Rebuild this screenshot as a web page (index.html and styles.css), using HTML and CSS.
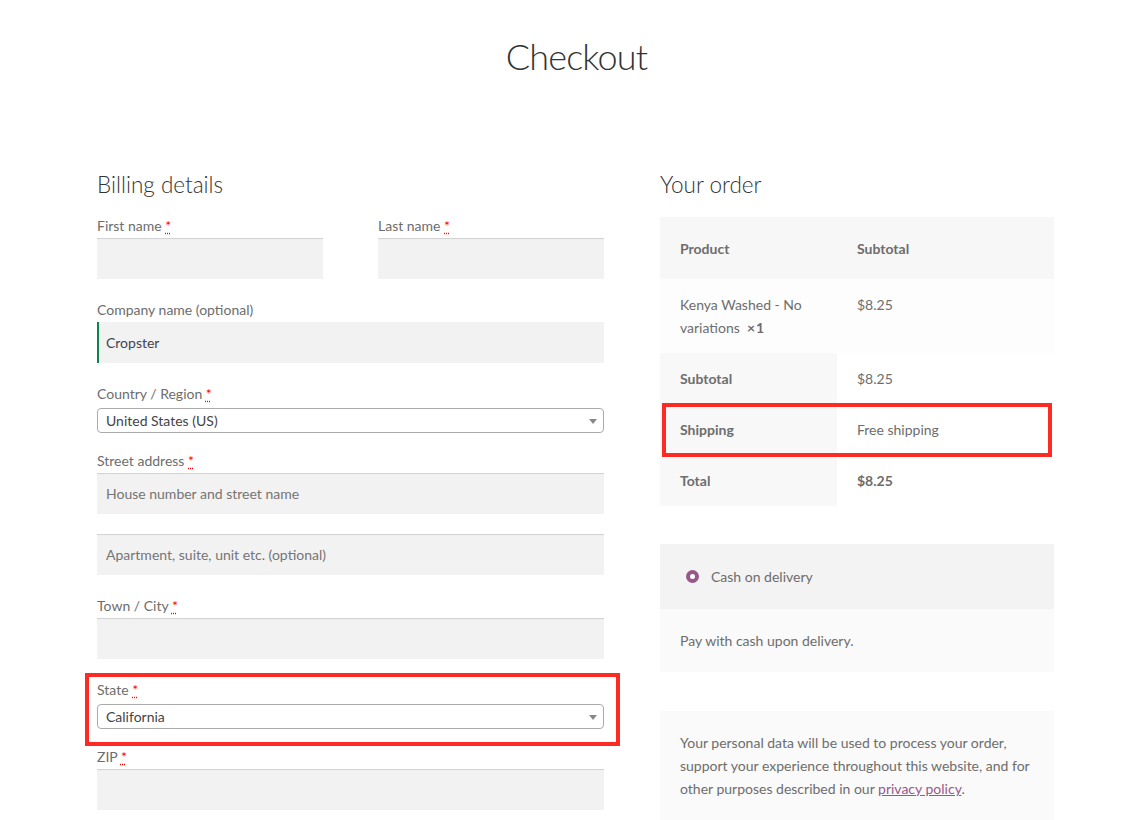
FILE: index.html
```html
<!DOCTYPE html>
<html lang="en">
<head>
<meta charset="utf-8">
<title>Checkout</title>
<link rel="stylesheet" href="styles.css">
</head>
<body>
<header class="page-header">
  <h1 class="page-title">Checkout</h1>
</header>
<main class="checkout">
  <section class="billing">
    <h3 class="section-title">Billing details</h3>
    <div class="row-split">
      <div class="form-row">
        <label class="field-label">First name <abbr class="required">*</abbr></label>
        <div class="input"></div>
      </div>
      <div class="form-row">
        <label class="field-label">Last name <abbr class="required">*</abbr></label>
        <div class="input"></div>
      </div>
    </div>
    <div class="form-row">
      <label class="field-label">Company name (optional)</label>
      <div class="input validated">Cropster</div>
    </div>
    <div class="form-row select-row">
      <label class="field-label">Country / Region <abbr class="required">*</abbr></label>
      <div class="select">United States (US)<span class="arrow"></span></div>
    </div>
    <div class="form-row">
      <label class="field-label">Street address <abbr class="required">*</abbr></label>
      <div class="input placeholder">House number and street name</div>
      <div class="input placeholder second">Apartment, suite, unit etc. (optional)</div>
    </div>
    <div class="form-row">
      <label class="field-label">Town / City <abbr class="required">*</abbr></label>
      <div class="input"></div>
    </div>
    <div class="form-row select-row highlighted">
      <label class="field-label">State <abbr class="required">*</abbr></label>
      <div class="select">California<span class="arrow"></span></div>
    </div>
    <div class="form-row">
      <label class="field-label">ZIP <abbr class="required">*</abbr></label>
      <div class="input"></div>
    </div>
  </section>

  <section class="order">
    <h3 class="section-title">Your order</h3>
    <table class="order-table">
      <thead>
        <tr><th class="col-a">Product</th><th>Subtotal</th></tr>
      </thead>
      <tbody>
        <tr><td class="col-a">Kenya Washed - No variations&nbsp; <strong>×&#8202;1</strong></td><td>$8.25</td></tr>
      </tbody>
      <tfoot>
        <tr><th>Subtotal</th><td>$8.25</td></tr>
        <tr class="highlighted-row"><th>Shipping</th><td>Free shipping</td></tr>
        <tr><th>Total</th><td><strong>$8.25</strong></td></tr>
      </tfoot>
    </table>

    <div class="payment">
      <div class="payment-method">
        <span class="radio"></span>
        <span>Cash on delivery</span>
      </div>
      <div class="payment-box">Pay with cash upon delivery.</div>
    </div>

    <div class="privacy">
      Your personal data will be used to process your order, support your experience throughout this website, and for other purposes described in our <a href="#" class="link">privacy policy</a>.
    </div>
  </section>
</main>
</body>
</html>
```

FILE: styles.css
```css
*, *::before, *::after { box-sizing: border-box; }

html, body {
  margin: 0;
  padding: 0;
  background: #ffffff;
  overflow: hidden;
}

body {
  font-family: "Lato", "Liberation Sans", sans-serif;
  font-size: 14px;
  line-height: 23px;
  color: #6d6d6d;
}

.page-header {
  padding-top: 34px;
  text-align: center;
}

.page-title {
  margin: 0 0 0 6px;
  font-size: 36px;
  line-height: 44px;
  letter-spacing: -0.8px;
  font-weight: 300;
  color: #333333;
}

.checkout {
  display: flex;
  gap: 56px;
  width: 957px;
  margin: 92px 0 0 97px;
  align-items: flex-start;
}

.billing { width: 507px; }
.order { width: 394px; }

.section-title {
  margin: 0;
  font-size: 22.5px;
  line-height: 30px;
  font-weight: 300;
  color: #333333;
}

.billing .section-title { margin-bottom: 15px; }
.order .section-title { margin-bottom: 17px; }

.row-split {
  display: flex;
  justify-content: space-between;
}
.row-split .form-row { width: 226px; }

.form-row { margin-bottom: 20px; }
.form-row.select-row { margin-bottom: 17px; }

.field-label {
  display: block;
  line-height: 22px;
  margin-bottom: 1px;
  color: #6d6d6d;
}

.required {
  color: #ff0000;
  text-decoration: underline dotted;
  text-underline-offset: 2px;
  border: 0;
}

.input {
  height: 41px;
  background: #f2f2f2;
  box-shadow: inset 0 2px 1px -1px rgba(0, 0, 0, 0.14);
  padding: 0 9px;
  line-height: 41px;
  color: #43454b;
}
.input.validated {
  box-shadow: inset 2px 0 0 #0f834d;
}
.input.placeholder { color: #757575; }
.input.second { margin-top: 20px; }

.select {
  position: relative;
  margin-top: 3px;
  height: 25px;
  border: 1px solid #aaaaaa;
  border-radius: 4px;
  background: #ffffff;
  padding: 0 8px;
  line-height: 23px;
  color: #444444;
}
.select .arrow {
  position: absolute;
  right: 6px;
  top: 10px;
  width: 0;
  height: 0;
  border-left: 4px solid transparent;
  border-right: 4px solid transparent;
  border-top: 5px solid #888888;
}

.highlighted { position: relative; }
.highlighted::after {
  content: "";
  position: absolute;
  left: -12px;
  right: -16px;
  top: -6px;
  bottom: -17px;
  border: 4px solid #fe2b25;
  pointer-events: none;
}

/* order table */
.order-table {
  width: 394px;
  border-collapse: collapse;
  table-layout: fixed;
}
.order-table .col-a { width: 177px; }
.order-table th,
.order-table td {
  text-align: left;
  vertical-align: top;
  padding: 14px 20px;
  line-height: 23px;
}
.order-table th { font-weight: 700; }
.order-table thead th {
  background: #f7f7f7;
  padding-top: 20px;
  padding-bottom: 19px;
}
.order-table tbody td { background: #fdfdfd; }
.order-table tfoot th { background: #f8f8f8; }
.order-table tfoot td { background: #ffffff; }
.order-table strong { font-weight: 700; }

.highlighted-row th { position: relative; }
.highlighted-row th::after {
  content: "";
  position: absolute;
  left: 2px;
  top: -1px;
  width: 390px;
  height: 54px;
  border: 4px solid #fe2b25;
  pointer-events: none;
  z-index: 2;
}

/* payment */
.payment { margin-top: 38px; }
.payment-method {
  display: flex;
  align-items: center;
  gap: 12px;
  height: 65px;
  padding-left: 26px;
  background: #f3f3f3;
  color: #6d6d6d;
}
.radio {
  width: 13px;
  height: 13px;
  border-radius: 50%;
  background: #96588a;
  display: flex;
  align-items: center;
  justify-content: center;
}
.radio::after {
  content: "";
  width: 5px;
  height: 5px;
  border-radius: 50%;
  background: #ffffff;
}
.payment-box {
  height: 63px;
  background: #fafafa;
  padding: 20px 20px;
}

.privacy {
  margin-top: 39px;
  background: #fafafa;
  padding: 20px 20px 40px;
  line-height: 23px;
}
.link {
  color: #96588a;
  text-decoration: underline;
}
```
